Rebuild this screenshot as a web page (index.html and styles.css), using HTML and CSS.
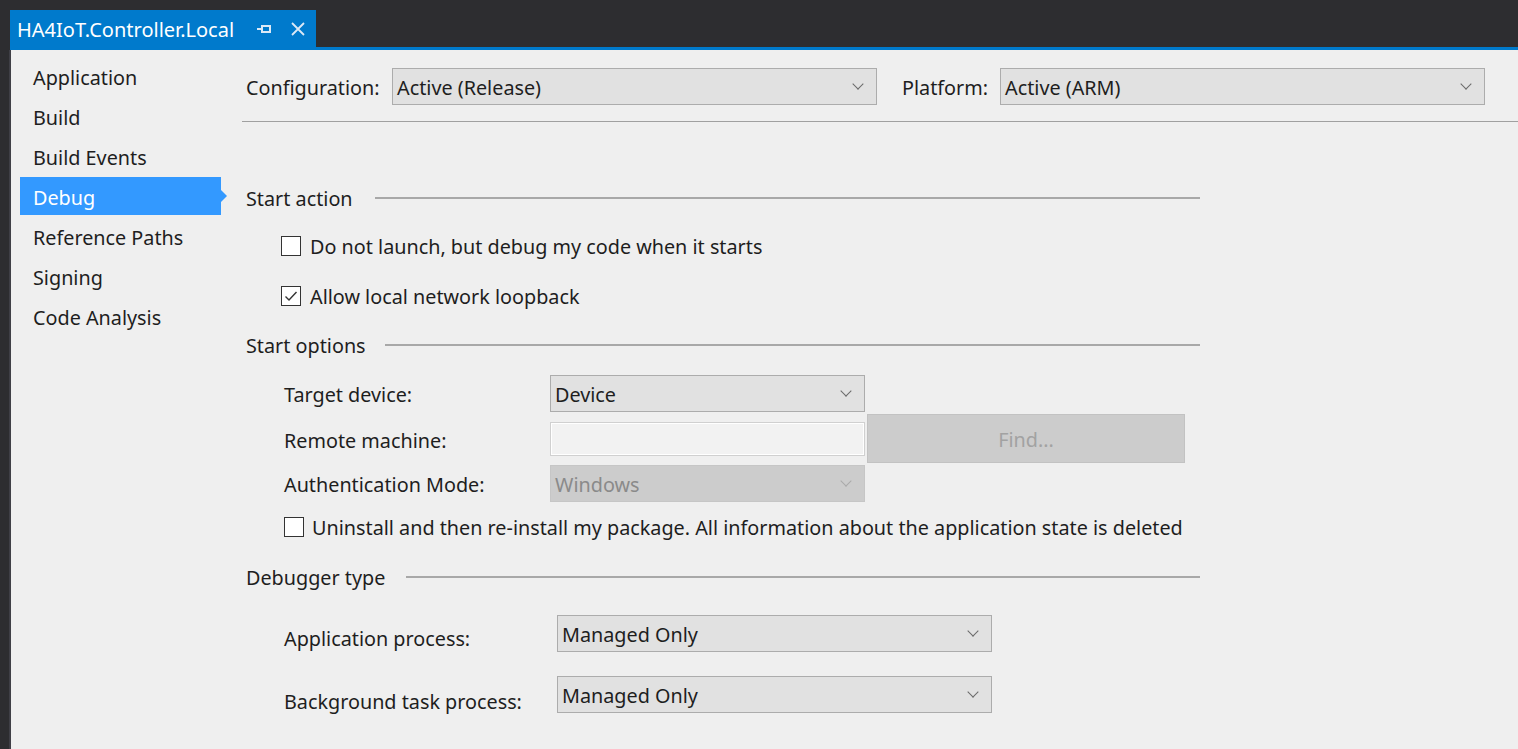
FILE: index.html
```html
<!DOCTYPE html>
<html>
<head>
<meta charset="utf-8">
<link rel="stylesheet" href="styles.css">
</head>
<body>
<div class="titlebar">
  <div class="tab">
    <span class="tab-title">HA4IoT.Controller.Local</span>
    <svg class="pin" width="16" height="12" viewBox="0 0 16 12"><path d="M1 6h5M6 2v8M6 3h8v6H6" fill="none" stroke="#dbe9f6" stroke-width="2"/></svg>
    <svg class="close" width="16" height="16" viewBox="0 0 16 16"><path d="M2 2l12 12M14 2L2 14" stroke="#dbe9f6" stroke-width="1.8"/></svg>
  </div>
</div>
<div class="accent"></div>
<div class="main">
  <nav class="sidebar">
    <div class="nav-item">Application</div>
    <div class="nav-item">Build</div>
    <div class="nav-item">Build Events</div>
    <div class="nav-item selected">Debug</div>
    <div class="nav-item">Reference Paths</div>
    <div class="nav-item">Signing</div>
    <div class="nav-item">Code Analysis</div>
  </nav>
  <section class="content">
    <div class="topbar">
      <span class="top-label">Configuration:</span>
      <div class="select top-select"><span>Active (Release)</span><i class="chev"></i></div>
      <span class="top-label plat">Platform:</span>
      <div class="select top-select"><span>Active (ARM)</span><i class="chev"></i></div>
    </div>
    <div class="body">
      <div class="group-head first"><span>Start action</span><div class="rule"></div></div>
      <label class="check c1"><span class="box"></span><span class="ctext">Do not launch, but debug my code when it starts</span></label>
      <label class="check c2"><span class="box checked"><svg width="14" height="12" viewBox="0 0 14 12"><path d="M1.5 6.5l3.5 3.5 7.5-8" fill="none" stroke="#333" stroke-width="1.4"/></svg></span><span class="ctext">Allow local network loopback</span></label>
      <div class="group-head opts"><span>Start options</span><div class="rule"></div></div>
      <div class="frow target">
        <span class="flabel">Target device:</span>
        <div class="select fsel"><span>Device</span><i class="chev"></i></div>
      </div>
      <div class="frow remote">
        <span class="flabel">Remote machine:</span>
        <div class="textbox"></div>
        <div class="find">Find...</div>
      </div>
      <div class="frow auth">
        <span class="flabel">Authentication Mode:</span>
        <div class="select fsel disabled"><span>Windows</span><i class="chev"></i></div>
      </div>
      <label class="check c3"><span class="box"></span><span class="ctext">Uninstall and then re-install my package. All information about the application state is deleted</span></label>
      <div class="group-head dbg"><span>Debugger type</span><div class="rule"></div></div>
      <div class="drow app">
        <span class="dlabel">Application process:</span>
        <div class="select dsel"><span>Managed Only</span><i class="chev"></i></div>
      </div>
      <div class="drow bg">
        <span class="dlabel">Background task process:</span>
        <div class="select dsel"><span>Managed Only</span><i class="chev"></i></div>
      </div>
    </div>
  </section>
</div>
</body>
</html>
```

FILE: styles.css
```css
* { box-sizing: border-box; }
html, body { margin: 0; padding: 0; }
body {
  width: 1518px;
  height: 749px;
  overflow: hidden;
  background: #2d2d30;
  font-family: "Noto Sans", "Open Sans", sans-serif;
  font-size: 19.8px;
  line-height: 1.2;
  color: #1e1e1e;
}
.titlebar {
  height: 47px;
  padding-left: 10px;
  display: flex;
  align-items: flex-end;
}
.tab {
  width: 306px;
  height: 37px;
  background: #007acc;
  display: flex;
  align-items: center;
  padding-left: 7px;
  padding-top: 3px;
  color: #fff;
}
.tab-title { font-size: 20px; }
.pin { margin-left: 22px; margin-top: -2px; }
.close { margin-left: 18px; margin-top: -2px; }
.accent {
  height: 3px;
  margin-left: 10px;
  background: #007acc;
}
.main {
  display: flex;
  height: 699px;
  margin-left: 9px;
  border-left: 2px solid #3f3f46;
  background: #efefef;
}
.sidebar {
  width: 210px;
  padding: 6px 0 0 9px;
  flex: none;
}
.nav-item {
  height: 40px;
  width: 201px;
  padding-left: 13px;
  padding-top: 3px;
  display: flex;
  align-items: center;
  position: relative;
}
.nav-item.selected {
  background: #3399ff;
  color: #fff;
  height: 38px;
  margin: 1px 0;
}
.nav-item.selected::after {
  content: "";
  position: absolute;
  right: -6px;
  top: 13px;
  border-left: 6px solid #3399ff;
  border-top: 6px solid transparent;
  border-bottom: 6px solid transparent;
}
.content {
  flex: 1;
  padding-left: 21px;
}
.topbar {
  display: flex;
  align-items: center;
  padding: 18px 0 16px 4px;
  border-bottom: 1px solid #a0a0a0;
}
.top-label { width: 146px; flex: none; padding-top: 2px; }
.top-label.plat { width: 98px; margin-left: 25px; }
.select {
  height: 37px;
  background: #e1e1e1;
  border: 1px solid #acacac;
  display: flex;
  align-items: center;
  justify-content: space-between;
  padding: 2px 14px 0 4px;
  color: #1e1e1e;
}
.top-select { width: 485px; }
.chev {
  width: 8px;
  height: 8px;
  border-right: 1px solid #6a6a6a;
  border-bottom: 1px solid #6a6a6a;
  transform: rotate(45deg);
  margin-top: -7px;
}
.body { padding-left: 4px; width: 958px; }
.group-head {
  display: flex;
  align-items: center;
  height: 24px;
}
.group-head span { padding-top: 2px; }
.group-head .rule {
  flex: 1;
  height: 2px;
  background: #a8a8a8;
  margin-left: 22px;
}
.group-head.first { margin-top: 64px; }
.group-head.opts { margin-top: 27px; }
.group-head.dbg { margin-top: 28px; }
.group-head.opts .rule { margin-left: 19px; }
.group-head.dbg .rule { margin-left: 21px; }
.check {
  display: flex;
  align-items: center;
  height: 20px;
}
.ctext { padding-top: 2px; }
.box {
  width: 20px;
  height: 20px;
  border: 1px solid #333;
  background: #fff;
  margin-right: 9px;
  flex: none;
  display: flex;
  align-items: center;
  justify-content: center;
}
.c1 { margin-top: 26px; margin-left: 35px; }
.c2 { margin-top: 30px; margin-left: 35px; }
.c3 { margin-top: 15px; margin-left: 38px; }
.c3 .box { margin-right: 8px; }
.frow {
  display: flex;
  align-items: center;
  padding-left: 38px;
}
.flabel { width: 266px; flex: none; padding-top: 2px; }
.fsel { width: 315px; }
.target { margin-top: 18px; }
.remote { margin-top: 2px; height: 49px; }
.remote .flabel { padding-top: 5px; }
.textbox {
  width: 315px;
  height: 34px;
  background: #f2f2f2;
  border: 1px solid #d0d0d0;
  box-shadow: inset 0 0 0 1px #fff;
}
.find {
  width: 318px;
  height: 49px;
  margin-left: 2px;
  padding-top: 2px;
  background: #cccccc;
  border: 1px solid #c2c2c2;
  color: #a2a2a2;
  display: flex;
  align-items: center;
  justify-content: center;
}
.auth { margin-top: 2px; }
.disabled {
  background: #cccccc;
  border-color: #c6c6c6;
  color: #8a8a8a;
}
.disabled .chev { border-color: #aaa; }
.drow {
  display: flex;
  align-items: center;
  padding-left: 38px;
}
.dlabel { width: 273px; flex: none; }
.dsel { width: 435px; }
.app { margin-top: 26px; }
.app .dlabel { padding-top: 11px; }
.bg { margin-top: 23px; }
.bg .dlabel { padding-top: 15px; }
```
